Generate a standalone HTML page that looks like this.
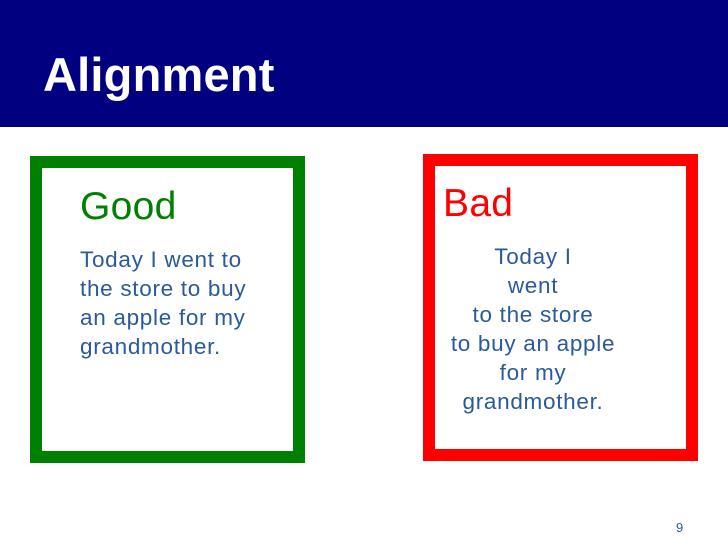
<!DOCTYPE html>
<html><head><style>
html,body{margin:0;padding:0;width:728px;height:546px;background:#fff;overflow:hidden;font-family:"Liberation Sans",Arial,sans-serif;position:relative}
.hdr{position:absolute;left:0;top:0;width:728px;height:127px;background:#000080}
.title{position:absolute;left:43px;top:48px;color:#fff;font-weight:bold;font-size:47px;line-height:54px;letter-spacing:0.2px}
.box{position:absolute;box-sizing:border-box;border:12px solid}
.g{left:30px;top:156px;width:275px;height:307px;border-color:#008000}
.r{left:423px;top:154px;width:275px;height:307px;border-color:#ff0000}
.h{position:absolute;font-size:39px;line-height:44px;letter-spacing:0.3px}
.t{position:absolute;color:#2a5a9a;font-size:22.5px;line-height:29px;letter-spacing:0.7px}
</style></head><body>
<div class="hdr"></div>
<div class="title">Alignment</div>
<div class="box g"></div>
<div class="box r"></div>
<div class="h" style="left:80px;top:185px;color:#008000">Good</div>
<div class="t" style="left:80px;top:245px">Today I went to<br>the store to buy<br>an apple for my<br>grandmother.</div>
<div class="h" style="left:443px;top:182px;color:#ff0000">Bad</div>
<div class="t" style="left:423px;width:220px;top:242px;text-align:center">Today I<br>went<br>to the store<br>to buy an apple<br>for my<br>grandmother.</div>
<div style="position:absolute;left:676px;top:520px;font-size:13px;color:#2a5a9a">9</div>
</body></html>
